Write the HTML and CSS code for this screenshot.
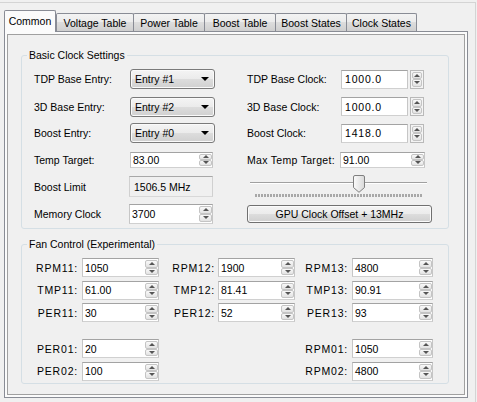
FILE: index.html
```html
<!DOCTYPE html>
<html>
<head>
<meta charset="utf-8">
<title>Common</title>
<link rel="stylesheet" href="styles.css">
</head>
<body>
<div class="window">
  <div class="tabstrip">
    <div class="tab active w52">Common</div>
    <div class="tab first w78">Voltage Table</div>
    <div class="tab w72">Power Table</div>
    <div class="tab w72">Boost Table</div>
    <div class="tab w72">Boost States</div>
    <div class="tab w71">Clock States</div>
  </div>
  <div class="panel">
    <div class="page">
      <fieldset class="group basic">
        <legend>Basic Clock Settings</legend>
        <div class="basic-grid">
          <span class="lbl">TDP Base Entry:</span>
          <div class="combo"><span>Entry #1</span></div>
          <span class="lbl rl">TDP Base Clock:</span>
          <div class="pair"><div class="tb">1000.0</div><div class="spinbox"><span class="up"></span><span class="dn"></span></div></div>

          <span class="lbl">3D Base Entry:</span>
          <div class="combo"><span>Entry #2</span></div>
          <span class="lbl rl">3D Base Clock:</span>
          <div class="pair"><div class="tb">1000.0</div><div class="spinbox"><span class="up"></span><span class="dn"></span></div></div>

          <span class="lbl">Boost Entry:</span>
          <div class="combo"><span>Entry #0</span></div>
          <span class="lbl rl">Boost Clock:</span>
          <div class="pair"><div class="tb">1418.0</div><div class="spinbox"><span class="up"></span><span class="dn"></span></div></div>

          <span class="lbl">Temp Target:</span>
          <div class="num temp"><span class="val">83.00</span><span class="spin"><span class="up"></span><span class="dn"></span></span></div>
          <span class="lbl rl wide">Max Temp Target:</span>
          <div class="num maxtemp"><span class="val">91.00</span><span class="spin"><span class="up"></span><span class="dn"></span></span></div>

          <span class="lbl">Boost Limit</span>
          <div class="readonly">1506.5 MHz</div>
          <div class="slider">
            <div class="track"></div>
            <div class="ticks"></div>
            <svg class="thumb" width="12" height="18" viewBox="0 0 12 18">
              <defs>
                <linearGradient id="tg" x1="0" y1="0" x2="1" y2="0">
                  <stop offset="0" stop-color="#fbfbfb"/>
                  <stop offset="1" stop-color="#d9d9d9"/>
                </linearGradient>
              </defs>
              <path d="M0.5 2 Q0.5 0.5 2 0.5 H10 Q11.5 0.5 11.5 2 V12.5 L6 17.3 L0.5 12.5 Z" fill="url(#tg)" stroke="#7f7f7f" stroke-width="1"/>
            </svg>
          </div>

          <span class="lbl">Memory Clock</span>
          <div class="num mem"><span class="val">3700</span><span class="spin"><span class="up"></span><span class="dn"></span></span></div>
          <div class="btn">GPU Clock Offset + 13MHz</div>
        </div>
      </fieldset>

      <fieldset class="group fan">
        <legend>Fan Control (Experimental)</legend>
        <div class="fan-grid">
          <span class="flbl p4">RPM11:</span>
          <div class="num f77"><span class="val">1050</span><span class="spin"><span class="up"></span><span class="dn"></span></span></div>
          <span class="flbl p3">RPM12:</span>
          <div class="num f77"><span class="val">1900</span><span class="spin"><span class="up"></span><span class="dn"></span></span></div>
          <span class="flbl p4">RPM13:</span>
          <div class="num f81"><span class="val">4800</span><span class="spin"><span class="up"></span><span class="dn"></span></span></div>

          <span class="flbl p4">TMP11:</span>
          <div class="num f77"><span class="val">61.00</span><span class="spin"><span class="up"></span><span class="dn"></span></span></div>
          <span class="flbl p3">TMP12:</span>
          <div class="num f77"><span class="val">81.41</span><span class="spin"><span class="up"></span><span class="dn"></span></span></div>
          <span class="flbl p4">TMP13:</span>
          <div class="num f81"><span class="val">90.91</span><span class="spin"><span class="up"></span><span class="dn"></span></span></div>

          <span class="flbl p4">PER11:</span>
          <div class="num f77"><span class="val">30</span><span class="spin"><span class="up"></span><span class="dn"></span></span></div>
          <span class="flbl p3">PER12:</span>
          <div class="num f77"><span class="val">52</span><span class="spin"><span class="up"></span><span class="dn"></span></span></div>
          <span class="flbl p4">PER13:</span>
          <div class="num f81"><span class="val">93</span><span class="spin"><span class="up"></span><span class="dn"></span></span></div>

          <div class="spacer"></div>

          <span class="flbl p4">PER01:</span>
          <div class="num f77"><span class="val">20</span><span class="spin"><span class="up"></span><span class="dn"></span></span></div>
          <span class="flbl p4 c5">RPM01:</span>
          <div class="num f81"><span class="val">1050</span><span class="spin"><span class="up"></span><span class="dn"></span></span></div>

          <span class="flbl p4">PER02:</span>
          <div class="num f77"><span class="val">100</span><span class="spin"><span class="up"></span><span class="dn"></span></span></div>
          <span class="flbl p4 c5">RPM02:</span>
          <div class="num f81"><span class="val">4800</span><span class="spin"><span class="up"></span><span class="dn"></span></span></div>
        </div>
      </fieldset>
    </div>
  </div>
</div>
</body>
</html>
```
FILE: styles.css
```css
* { box-sizing: border-box; }
html, body { margin: 0; padding: 0; }
body {
  background: #f0f0f0;
  font-family: "Liberation Sans", Arial, sans-serif;
  font-size: 10.5px;
  color: #000;
  width: 477px;
  height: 402px;
  overflow: hidden;
}
.window {
  margin-top: 2px;
  width: 476px;
  height: 400px;
  border-top: 1px solid #d4d4d4;
  border-right: 1px solid #d4d4d4;
}

/* tabs */
.tabstrip {
  display: flex;
  align-items: flex-end;
  height: 22px;
  margin: 7px 0 -1px 4px;
  position: relative;
  z-index: 1;
}
.tab {
  height: 18px;
  margin-bottom: 1px;
  margin-left: -1px;
  border: 1px solid #898c95;
  border-bottom: none;
  border-radius: 2px 2px 0 0;
  background: linear-gradient(#f3f3f3 0%, #ebebeb 50%, #dddddd 50%, #cfcfcf 100%);
  display: flex;
  align-items: center;
  justify-content: center;
  white-space: nowrap;
}
.tab.active {
  height: 22px;
  margin-bottom: 0;
  margin-left: 0;
  background: #fbfbfb;
  padding-bottom: 1px;
}
.tab.first { margin-left: 0; }
.w52 { width: 52px; }
.w78 { width: 78px; }
.w72 { width: 72px; }
.w71 { width: 71px; }

/* panel */
.panel {
  margin-left: 4px;
  width: 464px;
  height: 367px;
  border: 1px solid #898c95;
  background: #fbfbfb;
  padding: 2px;
}
.page {
  height: 100%;
  border: 1px solid #a0a0a0;
  background: #f0f0f0;
  padding: 14px 15px 0 13px;
}

/* group boxes */
.group {
  margin: 0;
  padding: 0;
  border: 1px solid #d5dfe5;
  border-radius: 3px;
  min-width: 0;
}
.group legend {
  padding: 0 2px;
  margin-left: 5px;
  line-height: 13px;
  height: 13px;
}
.fan { margin-top: 8.5px; }

.basic-grid {
  display: grid;
  grid-template-columns: 96px 86px 31px 93px 92px;
  grid-template-rows: 28px 27px 26px 27px 27px 27px;
  padding: 3px 0 1px 12px;
  align-items: center;
}
.lbl { white-space: nowrap; }
.rl { grid-column: 4; }
.wide { letter-spacing: 0.3px; }

/* combo */
.combo {
  width: 85px;
  height: 20px;
  border: 1px solid #7a7a7a;
  border-radius: 3px;
  background: linear-gradient(#f4f4f4 0%, #ebebeb 50%, #dddddd 50%, #d0d0d0 100%);
  box-shadow: inset 0 0 0 1px #fafafa;
  display: flex;
  align-items: center;
  justify-content: space-between;
  padding: 0 5px 0 4px;
}
.combo::after {
  content: "";
  border-left: 4px solid transparent;
  border-right: 4px solid transparent;
  border-top: 4px solid #000;
}

/* text boxes */
.pair { display: flex; gap: 2px; margin-left: 1px; }
.tb {
  width: 67px;
  height: 19px;
  background: #fff;
  border: 1px solid;
  border-color: #a3a3a3 #c6c6c6 #d0d0d0 #c6c6c6;
  padding-left: 3px;
  display: flex;
  align-items: center;
  letter-spacing: 0.8px;
}
.spinbox {
  width: 14px;
  height: 19px;
  border: 1px solid #b9b9b9;
  background: #f4f4f4;
  display: flex;
  flex-direction: column;
  padding: 1px;
}
.num {
  display: flex;
  align-items: stretch;
  background: #fff;
  border: 1px solid;
  border-color: #a3a3a3 #c6c6c6 #d0d0d0 #c6c6c6;
}
.num .val {
  flex: 1;
  padding-left: 2px;
  display: flex;
  align-items: center;
}
.spin {
  width: 13px;
  display: flex;
  flex-direction: column;
  margin: 1px 0 1px 0;
}
.spin span, .spinbox span {
  flex: 1;
  display: flex;
  align-items: center;
  justify-content: center;
  border: 1px solid #c4c4c4;
  border-radius: 2px;
  background: linear-gradient(#f9f9f9, #e2e2e2);
}
.up::after {
  content: "";
  border-left: 3px solid transparent;
  border-right: 3px solid transparent;
  border-bottom: 3px solid #555;
}
.dn::after {
  content: "";
  border-left: 3px solid transparent;
  border-right: 3px solid transparent;
  border-top: 3px solid #555;
}
.temp { width: 83px; height: 16px; }
.maxtemp { width: 85px; height: 16px; }
.mem { width: 84px; height: 20px; margin-left: -1px; }

.readonly {
  width: 84px;
  height: 21px;
  margin-left: -1px;
  border: 1px solid;
  border-color: #a8a8a8 #d0d0d0 #d8d8d8 #d0d0d0;
  background: #f0f0f0;
  display: flex;
  align-items: center;
  padding-left: 4px;
}

/* slider */
.slider {
  grid-column: 4 / 6;
  align-self: stretch;
  position: relative;
  display: flex;
  flex-direction: column;
}
.track {
  margin: 9px 0 0 3px;
  width: 177px;
  height: 2px;
  border-top: 1px solid #a0a0a0;
  border-bottom: 1px solid #ffffff;
}
.ticks {
  margin: 10px 0 0 8px;
  width: 168px;
  height: 3px;
  background: repeating-linear-gradient(to right, #a8a8a8 0, #a8a8a8 2px, transparent 2px, transparent 3px);
}
.thumb {
  position: absolute;
  left: 106px;
  top: 2px;
}

/* button */
.btn {
  grid-column: 4 / 6;
  width: 185px;
  height: 18px;
  border: 1px solid #707070;
  border-radius: 3px;
  background: linear-gradient(#f3f3f3 0%, #ebebeb 50%, #dddddd 50%, #cfcfcf 100%);
  box-shadow: inset 0 0 0 1px #fbfbfb;
  display: flex;
  align-items: center;
  justify-content: center;
}

/* fan grid */
.fan-grid {
  display: grid;
  grid-template-columns: 60px 77px 59px 77px 57px 81px;
  grid-template-rows: 19px 19px 19px 10px 19px 19px;
  row-gap: 3.5px;
  padding: 7.5px 0 2px 0;
  align-items: center;
}
.flbl { text-align: right; white-space: nowrap; letter-spacing: 0.8px; }
.p4 { padding-right: 4px; }
.p3 { padding-right: 3px; }
.c5 { grid-column: 5; }
.f77 { width: 77px; height: 19px; }
.f81 { width: 81px; height: 19px; }
.spacer { grid-column: 1 / -1; }
```
